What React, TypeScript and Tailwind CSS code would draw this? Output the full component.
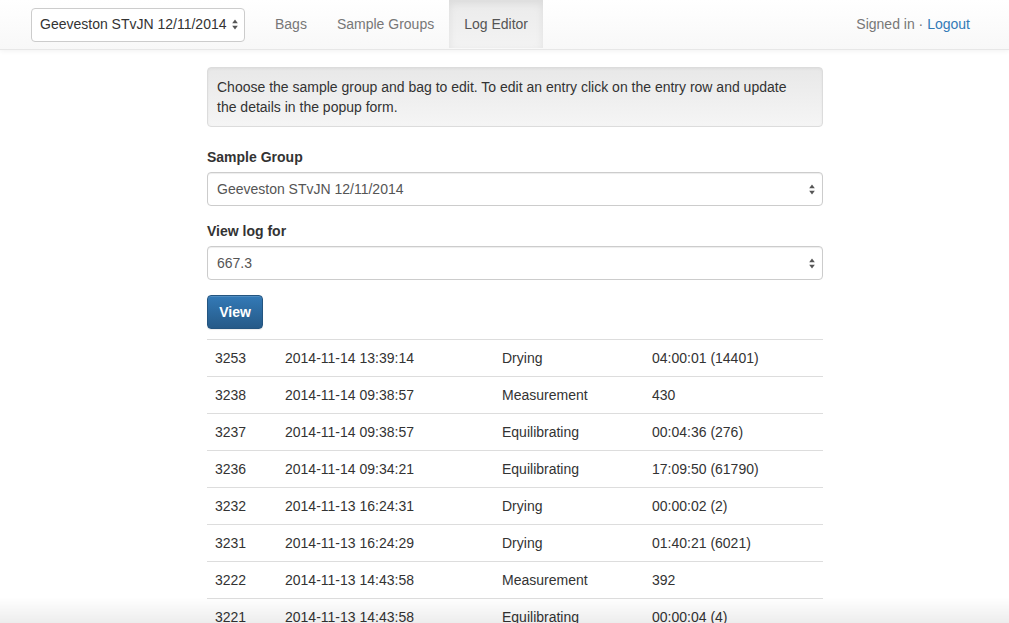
import { FC } from "react";

type LogRow = {
  id: string;
  time: string;
  kind: string;
  value: string;
};

const rows: LogRow[] = [
  { id: "3253", time: "2014-11-14 13:39:14", kind: "Drying", value: "04:00:01 (14401)" },
  { id: "3238", time: "2014-11-14 09:38:57", kind: "Measurement", value: "430" },
  { id: "3237", time: "2014-11-14 09:38:57", kind: "Equilibrating", value: "00:04:36 (276)" },
  { id: "3236", time: "2014-11-14 09:34:21", kind: "Equilibrating", value: "17:09:50 (61790)" },
  { id: "3232", time: "2014-11-13 16:24:31", kind: "Drying", value: "00:00:02 (2)" },
  { id: "3231", time: "2014-11-13 16:24:29", kind: "Drying", value: "01:40:21 (6021)" },
  { id: "3222", time: "2014-11-13 14:43:58", kind: "Measurement", value: "392" },
  { id: "3221", time: "2014-11-13 14:43:58", kind: "Equilibrating", value: "00:00:04 (4)" },
];

const Arrows = () => (
  <svg width="6" height="11" viewBox="0 0 6 11" className="shrink-0">
    <path d="M3 0.5 L5.8 4.3 L0.2 4.3 Z" fill="#555" />
    <path d="M3 10.5 L5.8 6.7 L0.2 6.7 Z" fill="#555" />
  </svg>
);

const FakeSelect: FC<{ value: string; className?: string }> = ({ value, className }) => (
  <div
    className={`flex items-center justify-between h-[34px] bg-white border border-[#ccc] rounded-[4px] pl-[9px] pr-[7px] text-[14px] text-[#555] shadow-[inset_0_1px_1px_rgba(0,0,0,0.075)] ${className ?? ""}`}
  >
    <span>{value}</span>
    <Arrows />
  </div>
);

const Navbar = () => (
  <nav className="h-[50px] bg-gradient-to-b from-white to-[#f8f8f8] border-b border-[#e7e7e7] shadow-[0_1px_5px_rgba(0,0,0,0.06)] flex items-stretch">
    <div className="flex items-center pl-[31px] pr-[15px]">
      <div className="flex items-center justify-between whitespace-nowrap h-[34px] w-[214px] bg-white border border-[#ccc] rounded-[4px] pl-[8px] pr-[6px] text-[14px] text-[#333]">
        <span>Geeveston STvJN 12/11/2014</span>
        <Arrows />
      </div>
    </div>
    <div className="flex items-stretch text-[14px] text-[#777] pb-[1px]">
      <a className="flex items-center px-[15px]">Bags</a>
      <a className="flex items-center px-[15px]">Sample Groups</a>
      <a className="flex items-center px-[15px] text-[#555] bg-gradient-to-b from-[#ebebeb] to-[#f3f3f3] shadow-[inset_0_3px_9px_rgba(0,0,0,0.075)]">
        Log Editor
      </a>
    </div>
    <div className="ml-auto flex items-center pr-[39px] text-[14px] text-[#777]">
      Signed in ·&nbsp;<a className="text-[#337ab7]">Logout</a>
    </div>
  </nav>
);

const App = () => {
  return (
    <div className="relative min-h-[623px] bg-white font-['Liberation_Sans',Arial,sans-serif] text-[14px] text-[#333] overflow-hidden">
      <Navbar />
      <main className="pl-[207px] pt-[17px]">
        <div className="w-[616px]">
          <div className="bg-gradient-to-b from-[#e8e8e8] to-[#f5f5f5] border border-[#dcdcdc] rounded-[4px] px-[9px] py-[9px] leading-[20px] shadow-[inset_0_1px_3px_rgba(0,0,0,0.05),0_1px_0_rgba(255,255,255,0.1)]">
            Choose the sample group and bag to edit. To edit an entry click on the entry row and update
            <br />
            the details in the popup form.
          </div>

          <label className="block font-bold mt-[20px] mb-[5px] leading-[20px]">Sample Group</label>
          <FakeSelect value="Geeveston STvJN 12/11/2014" />

          <label className="block font-bold mt-[15px] mb-[5px] leading-[20px]">View log for</label>
          <FakeSelect value="667.3" />

          <button className="mt-[15px] h-[34px] w-[56px] rounded-[4px] border border-[#245580] bg-gradient-to-b from-[#337ab7] to-[#265a88] text-white font-bold text-[14px] shadow-[inset_0_1px_0_rgba(255,255,255,0.15),0_1px_1px_rgba(0,0,0,0.075)]">
            View
          </button>

          <table className="w-full mt-[10px] border-collapse">
            <tbody>
              {rows.map((r) => (
                <tr key={r.id} className="border-t border-[#ddd]">
                  <td className="w-[70px] px-[8px] h-[37px] leading-[20px]">{r.id}</td>
                  <td className="w-[217px] px-[8px] h-[37px]">{r.time}</td>
                  <td className="w-[150px] px-[8px] h-[37px]">{r.kind}</td>
                  <td className="px-[8px] h-[37px]">{r.value}</td>
                </tr>
              ))}
            </tbody>
          </table>
        </div>
      </main>
      <div className="pointer-events-none fixed left-0 right-0 bottom-0 h-[26px] bg-gradient-to-b from-[rgba(0,0,0,0)] to-[rgba(0,0,0,0.07)]" />
    </div>
  );
};

export default App;
